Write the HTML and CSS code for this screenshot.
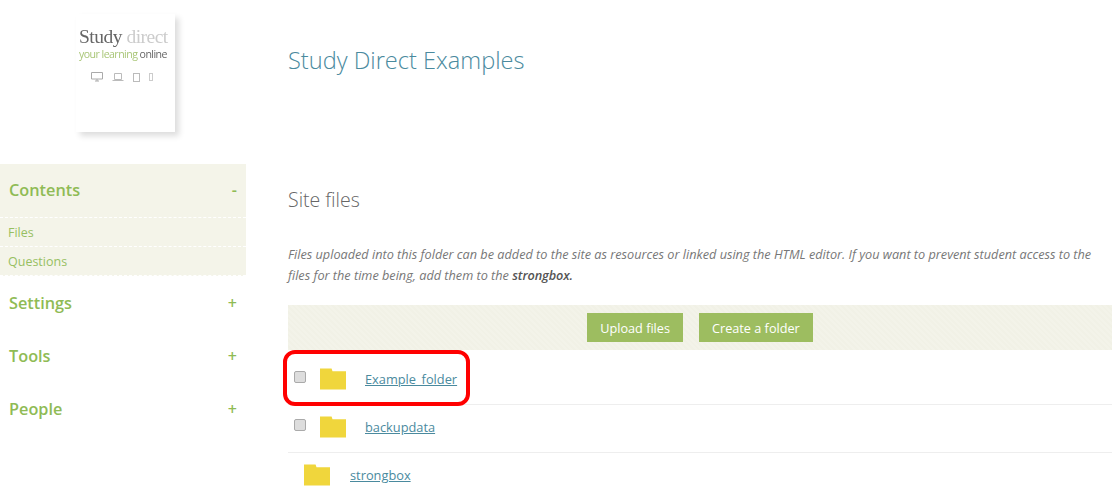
FILE: index.html
```html
<!DOCTYPE html>
<html lang="en">
<head>
<meta charset="utf-8">
<title>Study Direct Examples</title>
<link rel="stylesheet" href="styles.css">
</head>
<body>
<div class="page">
  <aside class="sidebar">
    <div class="logo-area">
      <div class="logo-card">
        <div class="logo-title">Study <span class="logo-light">direct</span></div>
        <div class="logo-sub"><span class="logo-green">your learning</span> online</div>
        <div class="logo-devices">
          <svg width="12" height="10" viewBox="0 0 12 10"><path d="M.5.5h11v6.5H.5zM4 9h4M6 7v2" fill="none" stroke="#aaa"/></svg>
          <svg width="12" height="10" viewBox="0 0 12 10"><path d="M2.5 1.5h7v6h-7zM.5 8.5h11" fill="none" stroke="#bbb"/></svg>
          <svg width="7" height="9" viewBox="0 0 7 9"><rect x=".5" y=".5" width="6" height="8" fill="none" stroke="#bbb"/></svg>
          <svg width="4" height="8" viewBox="0 0 4 8"><rect x=".5" y=".5" width="3" height="7" fill="none" stroke="#ccc"/></svg>
        </div>
      </div>
    </div>
    <nav class="nav">
      <section class="nav-open">
        <div class="nav-head"><span>Contents</span><span class="nav-sign">-</span></div>
        <a class="nav-link" href="#">Files</a>
        <a class="nav-link" href="#">Questions</a>
      </section>
      <div class="nav-head"><span>Settings</span><span class="nav-sign">+</span></div>
      <div class="nav-head"><span>Tools</span><span class="nav-sign">+</span></div>
      <div class="nav-head"><span>People</span><span class="nav-sign">+</span></div>
    </nav>
  </aside>
  <main class="main">
    <h1 class="title">Study Direct Examples</h1>
    <h2 class="subtitle">Site files</h2>
    <p class="intro">Files uploaded into this folder can be added to the site as resources or linked using the HTML editor. If you want to prevent student access to the files for the time being, add them to the <strong>strongbox.</strong></p>
    <div class="toolbar">
      <button class="btn">Upload files</button>
      <button class="btn">Create a folder</button>
    </div>
    <div class="rows">
      <div class="row">
        <input class="check" type="checkbox">
        <svg class="folder" viewBox="0 0 27 22"><path d="M0 0h12l1 3h14v19H0z" fill="#f0d63c"/></svg>
        <a class="file-link" href="#">Example_folder</a>
        <div class="highlight"></div>
      </div>
      <div class="row">
        <input class="check" type="checkbox">
        <svg class="folder" viewBox="0 0 27 22"><path d="M0 0h12l1 3h14v19H0z" fill="#f0d63c"/></svg>
        <a class="file-link" href="#">backupdata</a>
      </div>
      <div class="row row-plain">
        <svg class="folder" viewBox="0 0 27 22"><path d="M0 0h12l1 3h14v19H0z" fill="#f0d63c"/></svg>
        <a class="file-link" href="#">strongbox</a>
      </div>
    </div>
  </main>
</div>
</body>
</html>
```

FILE: styles.css
```css
* { box-sizing: border-box; }
html, body { margin: 0; height: 501px; overflow: hidden; background: #fff; }
body { font-family: "Open Sans", sans-serif; color: #555; }
.page { display: grid; grid-template-columns: 246px 1fr; }

.logo-area { height: 164px; padding: 14px 0 0 76px; }
.logo-card {
  width: 99px; height: 118px; background: #fff; padding: 13px 0 0 3px;
  box-shadow: 4px 4px 6px #ddd;
}
.logo-title { font: 19.5px/20px "Liberation Serif", serif; color: #666; letter-spacing: -.5px; white-space: nowrap; filter: blur(.3px); }
.logo-light { color: #ccc; }
.logo-sub { font-size: 10.6px; line-height: 15px; letter-spacing: -.55px; color: #666; white-space: nowrap; filter: blur(.3px); }
.logo-green { color: #a9c677; }
.logo-devices { display: flex; align-items: center; gap: 9px; margin: 10px 0 0 12px; }

.nav-open { background: #f4f4e9; height: 112px; }
.nav-head {
  height: 53px; padding: 0 9px; display: flex; justify-content: space-between; align-items: center;
  font-size: 16.3px; font-weight: 600; color: #8fbb55;
}
.nav-open .nav-head { height: 54px; padding-bottom: 2px; border-bottom: 1px dashed #fff; }
.nav-sign { font-size: 16px; }
.nav-link {
  display: flex; align-items: center; height: 29px; padding-left: 8px;
  font-size: 12.5px; color: #97bf62; text-decoration: none; border-bottom: 1px dashed #fff;
}

.main { padding: 0 5px 0 42px; }
.title { margin: 0; padding-top: 44px; height: 120px; font-size: 23.6px; line-height: 33px; font-weight: 300; color: #4a8a9e; }
.subtitle { margin: 0; padding-top: 65px; height: 115px; font-size: 19.5px; line-height: 29px; font-weight: 300; color: #666; }
.intro { margin: 0; height: 70px; padding-top: 9px; font-size: 12.7px; line-height: 21px; font-style: italic; color: #777; }
.intro strong { color: #555; font-weight: 600; letter-spacing: -.1px; }
.toolbar {
  height: 45px; margin-bottom: 7px;
  background: repeating-linear-gradient(45deg, #f3f3e9 0 2px, #f1f1e6 2px 4px);
  display: flex; justify-content: center; align-items: center; gap: 16px;
}
.btn {
  height: 29px; padding: 0 13px; border: 0; background: #9dbd60; color: #fff;
  font: 12.7px "Open Sans", sans-serif;
}
.row {
  position: relative; height: 48px; display: flex; align-items: center; padding: 0 0 4px 6px;
  border-bottom: 1px solid #eee; font-size: 12.8px;
}
.row-plain { padding-left: 16px; border-bottom: 0; }
.check {
  appearance: none; width: 12px; height: 12px; margin: 0 14px 3px 0;
  background: #ddd; border: 1px solid #aaa; border-radius: 2px;
}
.folder { width: 26px; height: 22px; }
.file-link { margin-left: 19px; color: #4a8a9e; }
.row-plain .file-link { margin-left: 20px; }
.highlight {
  position: absolute; left: -5px; top: -7px; width: 187px; height: 56px;
  border: 4px solid #f00; border-radius: 12px;
}
```
